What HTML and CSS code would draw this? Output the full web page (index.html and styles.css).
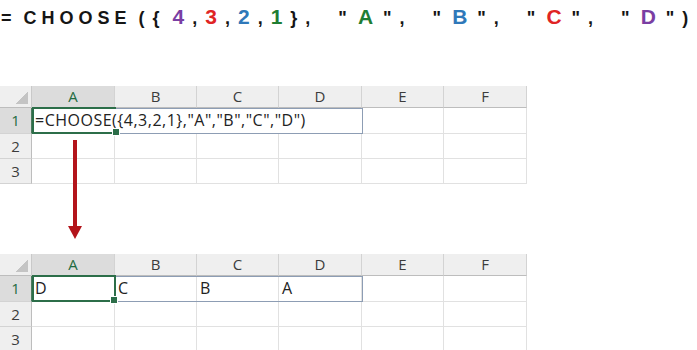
FILE: index.html
```html
<!DOCTYPE html>
<html>
  <head>
    <title>CHOOSE</title>
    <link rel="stylesheet" href="styles.css">
  </head>
  <body>
    <div class="page">
      <div class="title"><span class="fn">= CHOOSE</span><span class="open">(</span>{<span class="purple first">4</span>,<span class="red">3</span>,<span class="blue">2</span>,<span class="green">1</span>},  "<span class="green arg">A</span>",  "<span class="blue arg">B</span>",  "<span class="red arg">C</span>",  "<span class="purple arg">D</span>")</div>

      <!-- before: formula in A1 -->
      <div class="sheet sheet-formula">
        <div class="corner"></div>
        <div class="hd sel">A</div>
        <div class="hd">B</div>
        <div class="hd">C</div>
        <div class="hd">D</div>
        <div class="hd">E</div>
        <div class="hd">F</div>

        <div class="rh sel">1</div>
        <div class="c over">=CHOOSE({4,3,2,1},"A","B","C","D")</div>
        <div class="c over"></div>
        <div class="c over"></div>
        <div class="c over"></div>
        <div class="c"></div>
        <div class="c"></div>

        <div class="rh">2</div>
        <div class="c"></div>
        <div class="c"></div>
        <div class="c"></div>
        <div class="c"></div>
        <div class="c"></div>
        <div class="c"></div>

        <div class="rh">3</div>
        <div class="c"></div>
        <div class="c"></div>
        <div class="c"></div>
        <div class="c"></div>
        <div class="c"></div>
        <div class="c"></div>

        <div class="spill-box"></div>
        <div class="active no-right"></div>
      </div>

      <!-- after: spilled result -->
      <div class="sheet sheet-result">
        <div class="corner"></div>
        <div class="hd sel">A</div>
        <div class="hd">B</div>
        <div class="hd">C</div>
        <div class="hd">D</div>
        <div class="hd">E</div>
        <div class="hd">F</div>

        <div class="rh sel">1</div>
        <div class="c">D</div>
        <div class="c">C</div>
        <div class="c">B</div>
        <div class="c">A</div>
        <div class="c"></div>
        <div class="c"></div>

        <div class="rh">2</div>
        <div class="c"></div>
        <div class="c"></div>
        <div class="c"></div>
        <div class="c"></div>
        <div class="c"></div>
        <div class="c"></div>

        <div class="rh">3</div>
        <div class="c"></div>
        <div class="c"></div>
        <div class="c"></div>
        <div class="c"></div>
        <div class="c"></div>
        <div class="c"></div>

        <div class="spill-box"></div>
        <div class="active"></div>
      </div>

      <svg class="arrow" width="18" height="100" viewBox="0 0 18 100">
        <rect x="7" y="0" width="4" height="88" fill="#b3141b" />
        <polygon points="2,86 16,86 9,99" fill="#b3141b" />
      </svg>
    </div>
  </body>
</html>
```

FILE: styles.css
```css
* {
  box-sizing: border-box;
}

body {
  margin: 0;
  background: #fff;
  font-family: "Open Sans", sans-serif;
}

.page {
  position: relative;
  width: 697px;
  height: 350px;
  overflow: hidden;
}

/* big formula on top */
.title {
  height: 34px;
  padding-left: 1px;
  font-family: "Liberation Sans", Arial, sans-serif;
  font-weight: bold;
  font-size: 18px;
  line-height: 34px;
  letter-spacing: 8px;
  word-spacing: -3px;
  white-space: pre;
  color: #151515;
}

.title .fn {
  letter-spacing: 5px;
}

.title .open {
  margin-left: 7px;
}

.title .first {
  margin-left: 5px;
}

.title .arg {
  margin: 0 2px 0 3px;
}

.purple,
.red,
.blue,
.green {
  font-size: 21px;
}

.purple {
  color: #7a3ea3;
}

.red {
  color: #e02424;
}

.blue {
  color: #2f78b9;
}

.green {
  color: #1f7d33;
}

/* spreadsheet */
.sheet {
  position: relative;
  display: grid;
  grid-template-columns: 32px 83px 82px 82px 83px 82px 83px;
  grid-template-rows: 22px 26px 25px 25px;
  width: 527px;
  color: #222;
}

.sheet-formula {
  margin-top: 52px;
}

.sheet-result {
  margin-top: 70px;
}

.corner {
  position: relative;
  background: #efefef;
  border-right: 1px solid #c9c9c9;
  border-bottom: 1px solid #bdbdbd;
}

.corner::after {
  content: "";
  position: absolute;
  right: 3px;
  bottom: 3px;
  width: 13px;
  height: 13px;
  background: linear-gradient(to bottom right, transparent 50%, #c4c4c4 50%);
}

.hd {
  background: #efefef;
  border-right: 1px solid #d3d3d3;
  border-bottom: 1px solid #bdbdbd;
  text-align: center;
  font-size: 15px;
  line-height: 21px;
  color: #3c3c3c;
}

.rh {
  background: #efefef;
  border-right: 1px solid #bdbdbd;
  border-bottom: 1px solid #d3d3d3;
  text-align: center;
  font-size: 15px;
  line-height: 24px;
  color: #3c3c3c;
}

.hd.sel {
  background: #dcdcdc;
  border-bottom: 1px solid #4d7a5e;
  color: #1e6b41;
}

.rh.sel {
  background: #dcdcdc;
  border-right: 1px solid #4d7a5e;
  color: #1e6b41;
}

.c {
  background: #fff;
  border-right: 1px solid #e1e1e1;
  border-bottom: 1px solid #e1e1e1;
  padding-left: 3px;
  font-size: 16px;
  letter-spacing: 0.5px;
  line-height: 24px;
  white-space: nowrap;
}

.c.over {
  background: transparent;
  border-right: none;
}

.spill-box {
  position: absolute;
  left: 32px;
  top: 22px;
  width: 331px;
  height: 26px;
  border: 1px solid #8d9db4;
  pointer-events: none;
}

.active {
  position: absolute;
  left: 32px;
  top: 21px;
  width: 84px;
  height: 27px;
  border: 2px solid #2c6e49;
  pointer-events: none;
}

.active.no-right {
  border-right: none;
}

.active::after {
  content: "";
  position: absolute;
  right: -4px;
  bottom: -4px;
  width: 6px;
  height: 6px;
  background: #2c6e49;
  border: 1px solid #fff;
}

.arrow {
  position: absolute;
  left: 66px;
  top: 140px;
}
```
